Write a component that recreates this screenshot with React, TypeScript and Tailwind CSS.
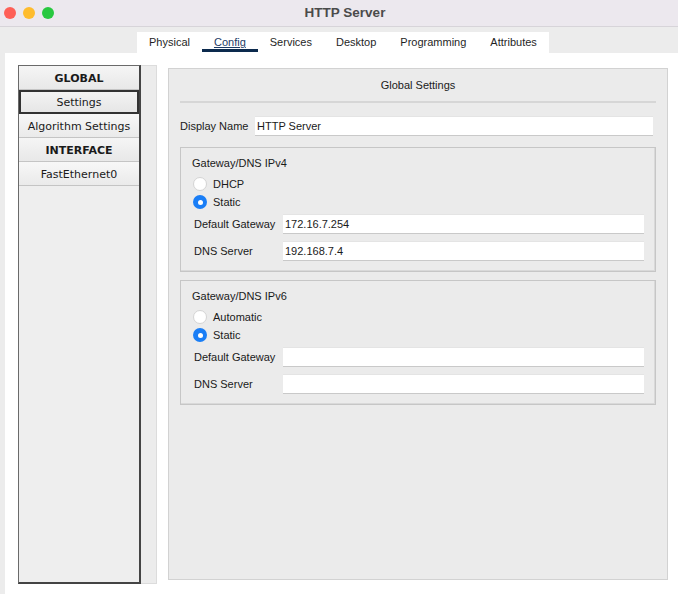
import React from "react";

const tabs = ["Physical", "Config", "Services", "Desktop", "Programming", "Attributes"];

function Radio({ checked, label }: { checked?: boolean; label: string }) {
  return (
    <div className="flex h-[18px] items-center gap-[6px]">
      {checked ? (
        <span className="flex h-[14px] w-[14px] items-center justify-center rounded-full bg-[#1a7ef6]">
          <span className="h-[5px] w-[5px] rounded-full bg-white" />
        </span>
      ) : (
        <span className="h-[14px] w-[14px] rounded-full border border-[#d4d4d4] bg-white" />
      )}
      <span>{label}</span>
    </div>
  );
}

function Field({ label, value, labelWidth }: { label: string; value?: string; labelWidth: string }) {
  return (
    <div className="flex h-[20px] items-center">
      <span className={labelWidth}>{label}</span>
      <div className="flex h-[20px] flex-1 items-center border-t border-t-[#e4e4e4] border-b border-b-[#c9c9c9] bg-white pl-[2px]">
        {value}
      </div>
    </div>
  );
}

function GatewayBox({ title, first, gateway, dns }: { title: string; first: string; gateway?: string; dns?: string }) {
  return (
    <div className="border border-[#c6c6c6] pt-[7px] pr-[11px] pb-[10px] pl-[11px] shadow-[inset_-1px_-1px_0_#d9d9d9]">
      <div className="h-[16px] leading-[16px]">{title}</div>
      <div className="mt-[4px] pl-[1px]">
        <Radio label={first} />
        <Radio checked label="Static" />
      </div>
      <div className="mt-[3px] flex flex-col gap-[7px] pl-[2px]">
        <Field label="Default Gateway" value={gateway} labelWidth="w-[89px]" />
        <Field label="DNS Server" value={dns} labelWidth="w-[89px]" />
      </div>
    </div>
  );
}

const item = "flex h-[24px] items-center justify-center bg-gradient-to-b";

export default function App() {
  return (
    <div
      className="flex h-[594px] w-[678px] flex-col overflow-hidden bg-[#ececec] text-[11px] text-[#1a1a1a]"
      style={{ fontFamily: '"Liberation Sans", Arial, sans-serif' }}
    >
      {/* title bar */}
      <div className="relative flex h-[27px] items-center justify-center border-b border-[#d7d4d9] bg-[#ece8ee]">
        <div className="absolute left-[4px] top-[7px] flex gap-[7px]">
          <span className="h-[12px] w-[12px] rounded-full bg-[#fe5f57]" />
          <span className="h-[12px] w-[12px] rounded-full bg-[#febc2e]" />
          <span className="h-[12px] w-[12px] rounded-full bg-[#28c840]" />
        </div>
        <span className="ml-[12px] text-[13.5px] font-bold text-[#4b4b4b]">HTTP Server</span>
      </div>

      {/* tabs */}
      <div className="flex h-[26px] items-end pl-[137px]">
        <div className="flex h-[21px] bg-white">
          {tabs.map((t) => (
            <div key={t} className="relative flex items-center px-[12px]">
              <span className={t === "Config" ? "text-[#1d3b66] underline" : "text-[#1f1f1f]"}>{t}</span>
              {t === "Config" && <span className="absolute bottom-[1px] left-0 right-0 h-[3px] bg-[#0c2a4d]" />}
            </div>
          ))}
        </div>
      </div>

      {/* content */}
      <div className="ml-[5px] flex flex-1 bg-white pt-[12px] pl-[13px] pr-[10px]">
        {/* sidebar */}
        <div className="mb-[10px] flex w-[139px]">
          <div
            className="flex w-[123px] flex-col border-l border-t border-[#6a6a6a] border-r-2 border-b-2 border-r-[#444] border-b-[#444] bg-[#eeeeee] text-center"
            style={{ fontFamily: '"DejaVu Sans", Verdana, sans-serif' }}
          >
            <div className={`${item} border-b border-[#c4c4c4] pt-[3px] from-[#f5f5f5] to-[#e8e8e8] font-bold`}>GLOBAL</div>
            <div className={`${item} border-2 border-[#333] pt-[2px] from-[#f3f3f3] to-[#e6e6e6]`}>Settings</div>
            <div className={`${item} border-b border-[#c4c4c4] pt-[3px] from-[#f7f7f7] to-[#eaeaea]`}>Algorithm Settings</div>
            <div className={`${item} border-b border-[#c4c4c4] pt-[3px] from-[#f5f5f5] to-[#e8e8e8] font-bold`}>INTERFACE</div>
            <div className={`${item} border-b border-[#c4c4c4] pt-[3px] from-[#f7f7f7] to-[#eaeaea]`}>FastEthernet0</div>
            <div className="flex-1" />
          </div>
          <div className="flex-1 border border-l-0 border-[#dcdcdc] bg-[#ececec]" />
        </div>

        {/* main panel */}
        <div className="mt-[3px] mb-[14px] ml-[11px] flex flex-1 flex-col border border-[#d2d2d2] bg-[#ebebeb] px-[11px]">
          <div className="flex h-[32px] items-center justify-center">Global Settings</div>
          <div className="h-[2px] bg-[#d6d6d6]" />
          <div className="mt-[13px] flex h-[20px] items-center pr-[3px]">
            <span className="w-[75px]">Display Name</span>
            <div className="flex h-[20px] flex-1 items-center border-t border-t-[#e4e4e4] border-b border-b-[#c9c9c9] bg-white pl-[2px]">
              HTTP Server
            </div>
          </div>
          <div className="mt-[11px] flex flex-col gap-[8px]">
            <GatewayBox title="Gateway/DNS IPv4" first="DHCP" gateway="172.16.7.254" dns="192.168.7.4" />
            <GatewayBox title="Gateway/DNS IPv6" first="Automatic" />
          </div>
        </div>
      </div>
    </div>
  );
}
